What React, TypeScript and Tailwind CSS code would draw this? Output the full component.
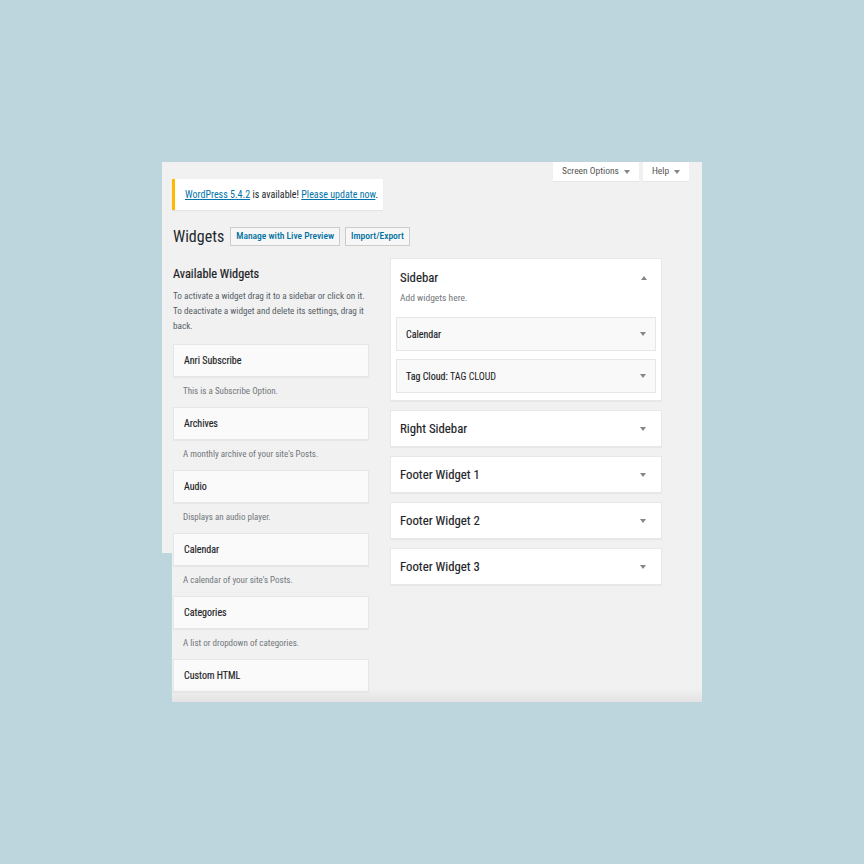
const FONT = { fontFamily: '"Roboto Condensed", Roboto, "Liberation Sans", sans-serif' };

const available = [
  { title: 'Anri Subscribe', desc: 'This is a Subscribe Option.' },
  { title: 'Archives', desc: "A monthly archive of your site's Posts." },
  { title: 'Audio', desc: 'Displays an audio player.' },
  { title: 'Calendar', desc: "A calendar of your site's Posts." },
  { title: 'Categories', desc: 'A list or dropdown of categories.' },
  { title: 'Custom HTML', desc: '' },
];

const areas = ['Right Sidebar', 'Footer Widget 1', 'Footer Widget 2', 'Footer Widget 3'];

function Caret({ up = false }: { up?: boolean }) {
  return (
    <svg width="6" height="4" viewBox="0 0 6 4" className="shrink-0">
      {up ? (
        <path d="M0 4 L3 0 L6 4 Z" fill="#82878c" />
      ) : (
        <path d="M0 0 L6 0 L3 4 Z" fill="#82878c" />
      )}
    </svg>
  );
}

export default function App() {
  return (
    <div className="w-[864px] h-[864px] bg-[#bdd5dc] pt-[162px] pl-[162px]" style={FONT}>
      <div className="relative w-[540px] h-[540px] bg-[#f1f1f1] overflow-hidden">
        {/* header buttons */}
        <div className="flex justify-end gap-[4px] h-[17px] pr-[13px]">
          <div className="h-[19px] w-[86px] bg-white flex items-center justify-center gap-[5px] text-[9.5px] text-[#555] shadow-[0_1px_1px_rgba(0,0,0,0.04)]">
            Screen Options <Caret />
          </div>
          <div className="h-[19px] w-[46px] bg-white flex items-center justify-center gap-[5px] text-[9.5px] text-[#555] shadow-[0_1px_1px_rgba(0,0,0,0.04)]">
            Help <Caret />
          </div>
        </div>

        {/* update notice */}
        <div className="ml-[10px] w-[211px] h-[31px] bg-white border-l-[3px] border-[#ffb900] pl-[10px] leading-[31px] whitespace-nowrap text-[10px] text-[#23282d] shadow-[0_1px_1px_rgba(0,0,0,0.05)]">
          <span className="text-[#0073aa] underline">WordPress 5.4.2</span> is available!{' '}
          <span className="text-[#0073aa] underline">Please update now</span>.
        </div>

        {/* title row */}
        <div className="flex items-center mt-[17px] pl-[11px] h-[19px]">
          <h1 className="text-[16px] text-[#23282d] mr-[6px] leading-none">Widgets</h1>
          <div className="h-[19px] px-[5px] flex items-center border border-[#ccc] bg-[#f7f7f7] text-[9.5px] font-medium text-[#0071a1] whitespace-nowrap">
            Manage with Live Preview
          </div>
          <div className="ml-[5px] h-[19px] px-[5px] flex items-center border border-[#ccc] bg-[#f7f7f7] text-[9.5px] font-medium text-[#0071a1] whitespace-nowrap">
            Import/Export
          </div>
        </div>

        {/* columns */}
        <div className="flex gap-[21px] pl-[11px] mt-[12px]">
          <div className="w-[196px]">
            <h2 className="mt-[8px] h-[16px] leading-[16px] text-[12.3px] text-[#1d2327] [-webkit-text-stroke:0.2px_#1d2327]">Available Widgets</h2>
            <p className="mt-[6px] text-[9.2px] leading-[15px] text-[#555d66]">
              To activate a widget drag it to a sidebar or click on it. To deactivate a widget and delete its settings, drag it back.
            </p>
            <div className="mt-[11px] flex flex-col">
              {available.map((w) => (
                <div key={w.title}>
                  <div className="h-[33px] flex items-center px-[10px] bg-[#fafafa] border border-[#e6e6e6] shadow-[0_1px_1px_rgba(0,0,0,0.04)]">
                    <span className="text-[10px] text-[#1d2327] [-webkit-text-stroke:0.15px_#1d2327]">{w.title}</span>
                  </div>
                  <div className="h-[30px] flex items-center pl-[10px] text-[9px] text-[#72777c]">{w.desc}</div>
                </div>
              ))}
            </div>
          </div>

          <div className="w-[272px] flex flex-col gap-[9px]">
            <div className="bg-white border border-[#e8e8e8] shadow-[0_1px_1px_rgba(0,0,0,0.04)] px-[5px] pb-[7px]">
              <div className="flex items-center justify-between h-[37px] pl-[4px] pr-[9px]">
                <span className="text-[12.8px] text-[#1d2327] [-webkit-text-stroke:0.15px_#1d2327]">Sidebar</span>
                <Caret up />
              </div>
              <div className="pl-[4px] -mt-[5px] text-[9.5px] text-[#72777c]">Add widgets here.</div>
              <div className="mt-[12px] flex flex-col gap-[8px]">
                <div className="h-[34px] flex items-center justify-between pl-[9px] pr-[9px] bg-[#f9f9f9] border border-[#e6e6e6]">
                  <span className="text-[10px] text-[#1d2327] [-webkit-text-stroke:0.15px_#1d2327]">Calendar</span>
                  <Caret />
                </div>
                <div className="h-[34px] flex items-center justify-between pl-[9px] pr-[9px] bg-[#f9f9f9] border border-[#e6e6e6]">
                  <span className="text-[10px] text-[#1d2327]">
                    <span className="[-webkit-text-stroke:0.15px_#1d2327]">Tag Cloud:</span> TAG CLOUD
                  </span>
                  <Caret />
                </div>
              </div>
            </div>
            {areas.map((a) => (
              <div
                key={a}
                className="h-[37px] flex items-center justify-between pl-[9px] pr-[15px] bg-white border border-[#e8e8e8] shadow-[0_1px_1px_rgba(0,0,0,0.04)]"
              >
                <span className="text-[12.8px] text-[#1d2327] [-webkit-text-stroke:0.15px_#1d2327]">{a}</span>
                <Caret />
              </div>
            ))}
          </div>
        </div>

        {/* collage edge + bottom shade */}
        <div className="absolute left-0 bottom-0 w-[10px] h-[149px] bg-[#bdd5dc]" />
        <div className="absolute left-[10px] right-0 bottom-0 h-[14px] bg-gradient-to-b from-transparent to-[#e3e3e3]" />
      </div>
    </div>
  );
}
